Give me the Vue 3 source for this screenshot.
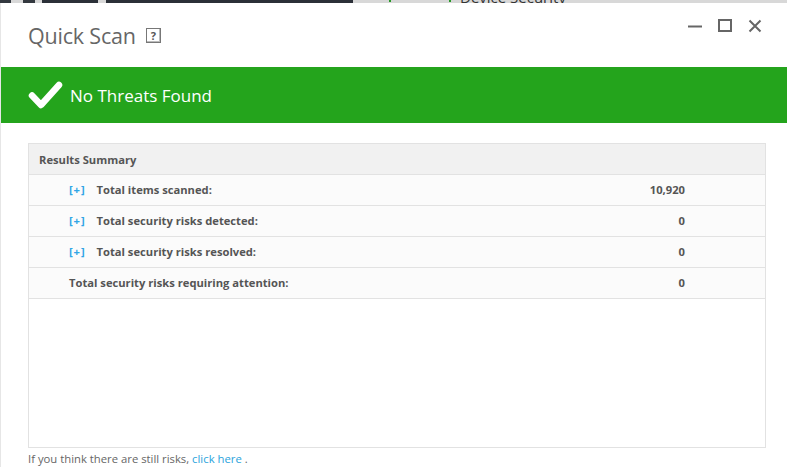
<script setup>
const rows = [
  { label: 'Total items scanned:', value: '10,920', expand: true },
  { label: 'Total security risks detected:', value: '0', expand: true },
  { label: 'Total security risks resolved:', value: '0', expand: true },
  { label: 'Total security risks requiring attention:', value: '0', expand: false }
]
const strip = [
  { w: 11, c: '#33383f' }, { w: 12, c: '#d8d8d8' }, { w: 12, c: '#33383f' }, { w: 7, c: '#d8d8d8' },
  { w: 56, c: '#2b3038' }, { w: 8, c: '#d8d8d8' }, { w: 247, c: '#2b3038' }
]
</script>

<template>
  <div class="page">
    <div class="strip">
      <span v-for="(s, i) in strip" :key="i" class="seg" :style="{ width: s.w + 'px', background: s.c }"></span>
      <span class="seg rest"></span>
      <span class="speck speck-a"></span>
      <span class="speck speck-b"></span>
      <span class="behind-text">Device Security</span>
    </div>
    <div class="window">
      <header class="titlebar">
        <div class="title">
          <span class="title-text">Quick Scan</span>
          <span class="help">?</span>
        </div>
        <div class="controls">
          <svg width="15" height="15" viewBox="0 0 15 15"><path d="M0 7.5h14" stroke="#666" stroke-width="2" fill="none"/></svg>
          <svg width="15" height="15" viewBox="0 0 15 15"><rect x="1" y="1" width="12" height="11" stroke="#666" stroke-width="2" fill="#fff"/></svg>
          <svg width="15" height="15" viewBox="0 0 15 15"><path d="M1.5 1.5l11 11M12.5 1.5l-11 11" stroke="#666" stroke-width="2" fill="none"/></svg>
        </div>
      </header>
      <section class="banner">
        <svg width="36" height="30" viewBox="0 0 36 30"><path d="M4 15.5l9 9.5L31 5" stroke="#fff" stroke-width="6.5" stroke-linecap="round" stroke-linejoin="round" fill="none"/></svg>
        <span>No Threats Found</span>
      </section>
      <main class="content">
        <div class="panel">
          <div class="panel-head">Results Summary</div>
          <div v-for="r in rows" :key="r.label" class="row">
            <div class="label">
              <span v-if="r.expand" class="toggle">[+]</span>
              <span>{{ r.label }}</span>
            </div>
            <div class="value">{{ r.value }}</div>
          </div>
        </div>
        <p class="foot">If you think there are still risks, <a>click here</a> .</p>
      </main>
    </div>
  </div>
</template>

<style scoped>
.page {
  width: 787px;
  height: 467px;
  overflow: hidden;
  font-family: "Open Sans", "Noto Sans", sans-serif;
  background: #fff;
  display: flex;
  flex-direction: column;
}
.strip { display: flex; height: 3px; flex: none; position: relative; overflow: hidden; }
.seg { display: block; height: 100%; flex: none; }
.rest { flex: 1; background: #d8d8d8; }
.speck { position: absolute; top: 0; width: 2px; height: 2px; background: #2a9a2a; }
.speck-a { left: 389px; }
.speck-b { left: 449px; }
.behind-text {
  position: absolute;
  left: 460px;
  top: -11px;
  font-size: 15px;
  line-height: 16px;
  color: #333;
  white-space: nowrap;
}
.window { flex: 1; border-left: 1px solid #e6e6e6; display: flex; flex-direction: column; min-height: 0; }
.titlebar {
  height: 64px;
  flex: none;
  display: flex;
  justify-content: space-between;
  align-items: flex-start;
  padding: 0 24px 0 27px;
}
.title { display: flex; align-items: center; height: 64px; gap: 10px; }
.title-text { font-size: 21.5px; color: #666; letter-spacing: -0.2px; }
.help {
  width: 13px;
  height: 13px;
  border: 1px solid #777;
  box-shadow: inset -1px -1px 0 #bbb;
  font-size: 11px;
  font-weight: 700;
  line-height: 13px;
  text-align: center;
  color: #555;
}
.controls { display: flex; gap: 15px; padding-top: 16px; }
.banner {
  height: 56px;
  flex: none;
  background: #24a41c;
  color: #fff;
  display: flex;
  align-items: center;
  gap: 6px;
  padding-left: 27px;
  font-size: 17px;
}
.content { flex: 1; padding: 20px 21px 0 27px; min-height: 0; }
.panel {
  height: 305px;
  box-sizing: border-box;
  border: 1px solid #e2e2e2;
  background: #fff;
}
.panel-head {
  height: 31px;
  box-sizing: border-box;
  background: #f1f1f1;
  border-bottom: 1px solid #e2e2e2;
  font-size: 11.2px;
  font-weight: 700;
  line-height: 31px;
  color: #555;
  padding-left: 10px;
}
.row {
  height: 31px;
  box-sizing: border-box;
  background: #fbfbfb;
  border-bottom: 1px solid #e2e2e2;
  display: flex;
  align-items: center;
  justify-content: space-between;
  padding: 0 80px 1px 40px;
  font-size: 11.2px;
  font-weight: 700;
  color: #555;
}
.label { display: flex; gap: 11px; }
.toggle { color: #2fa5e6; font-weight: 700; letter-spacing: 0.9px; }
.foot { margin: 3px 0 0; font-size: 11.3px; color: #666; line-height: 16px; }
.foot a { color: #2ba3dc; }
</style>
